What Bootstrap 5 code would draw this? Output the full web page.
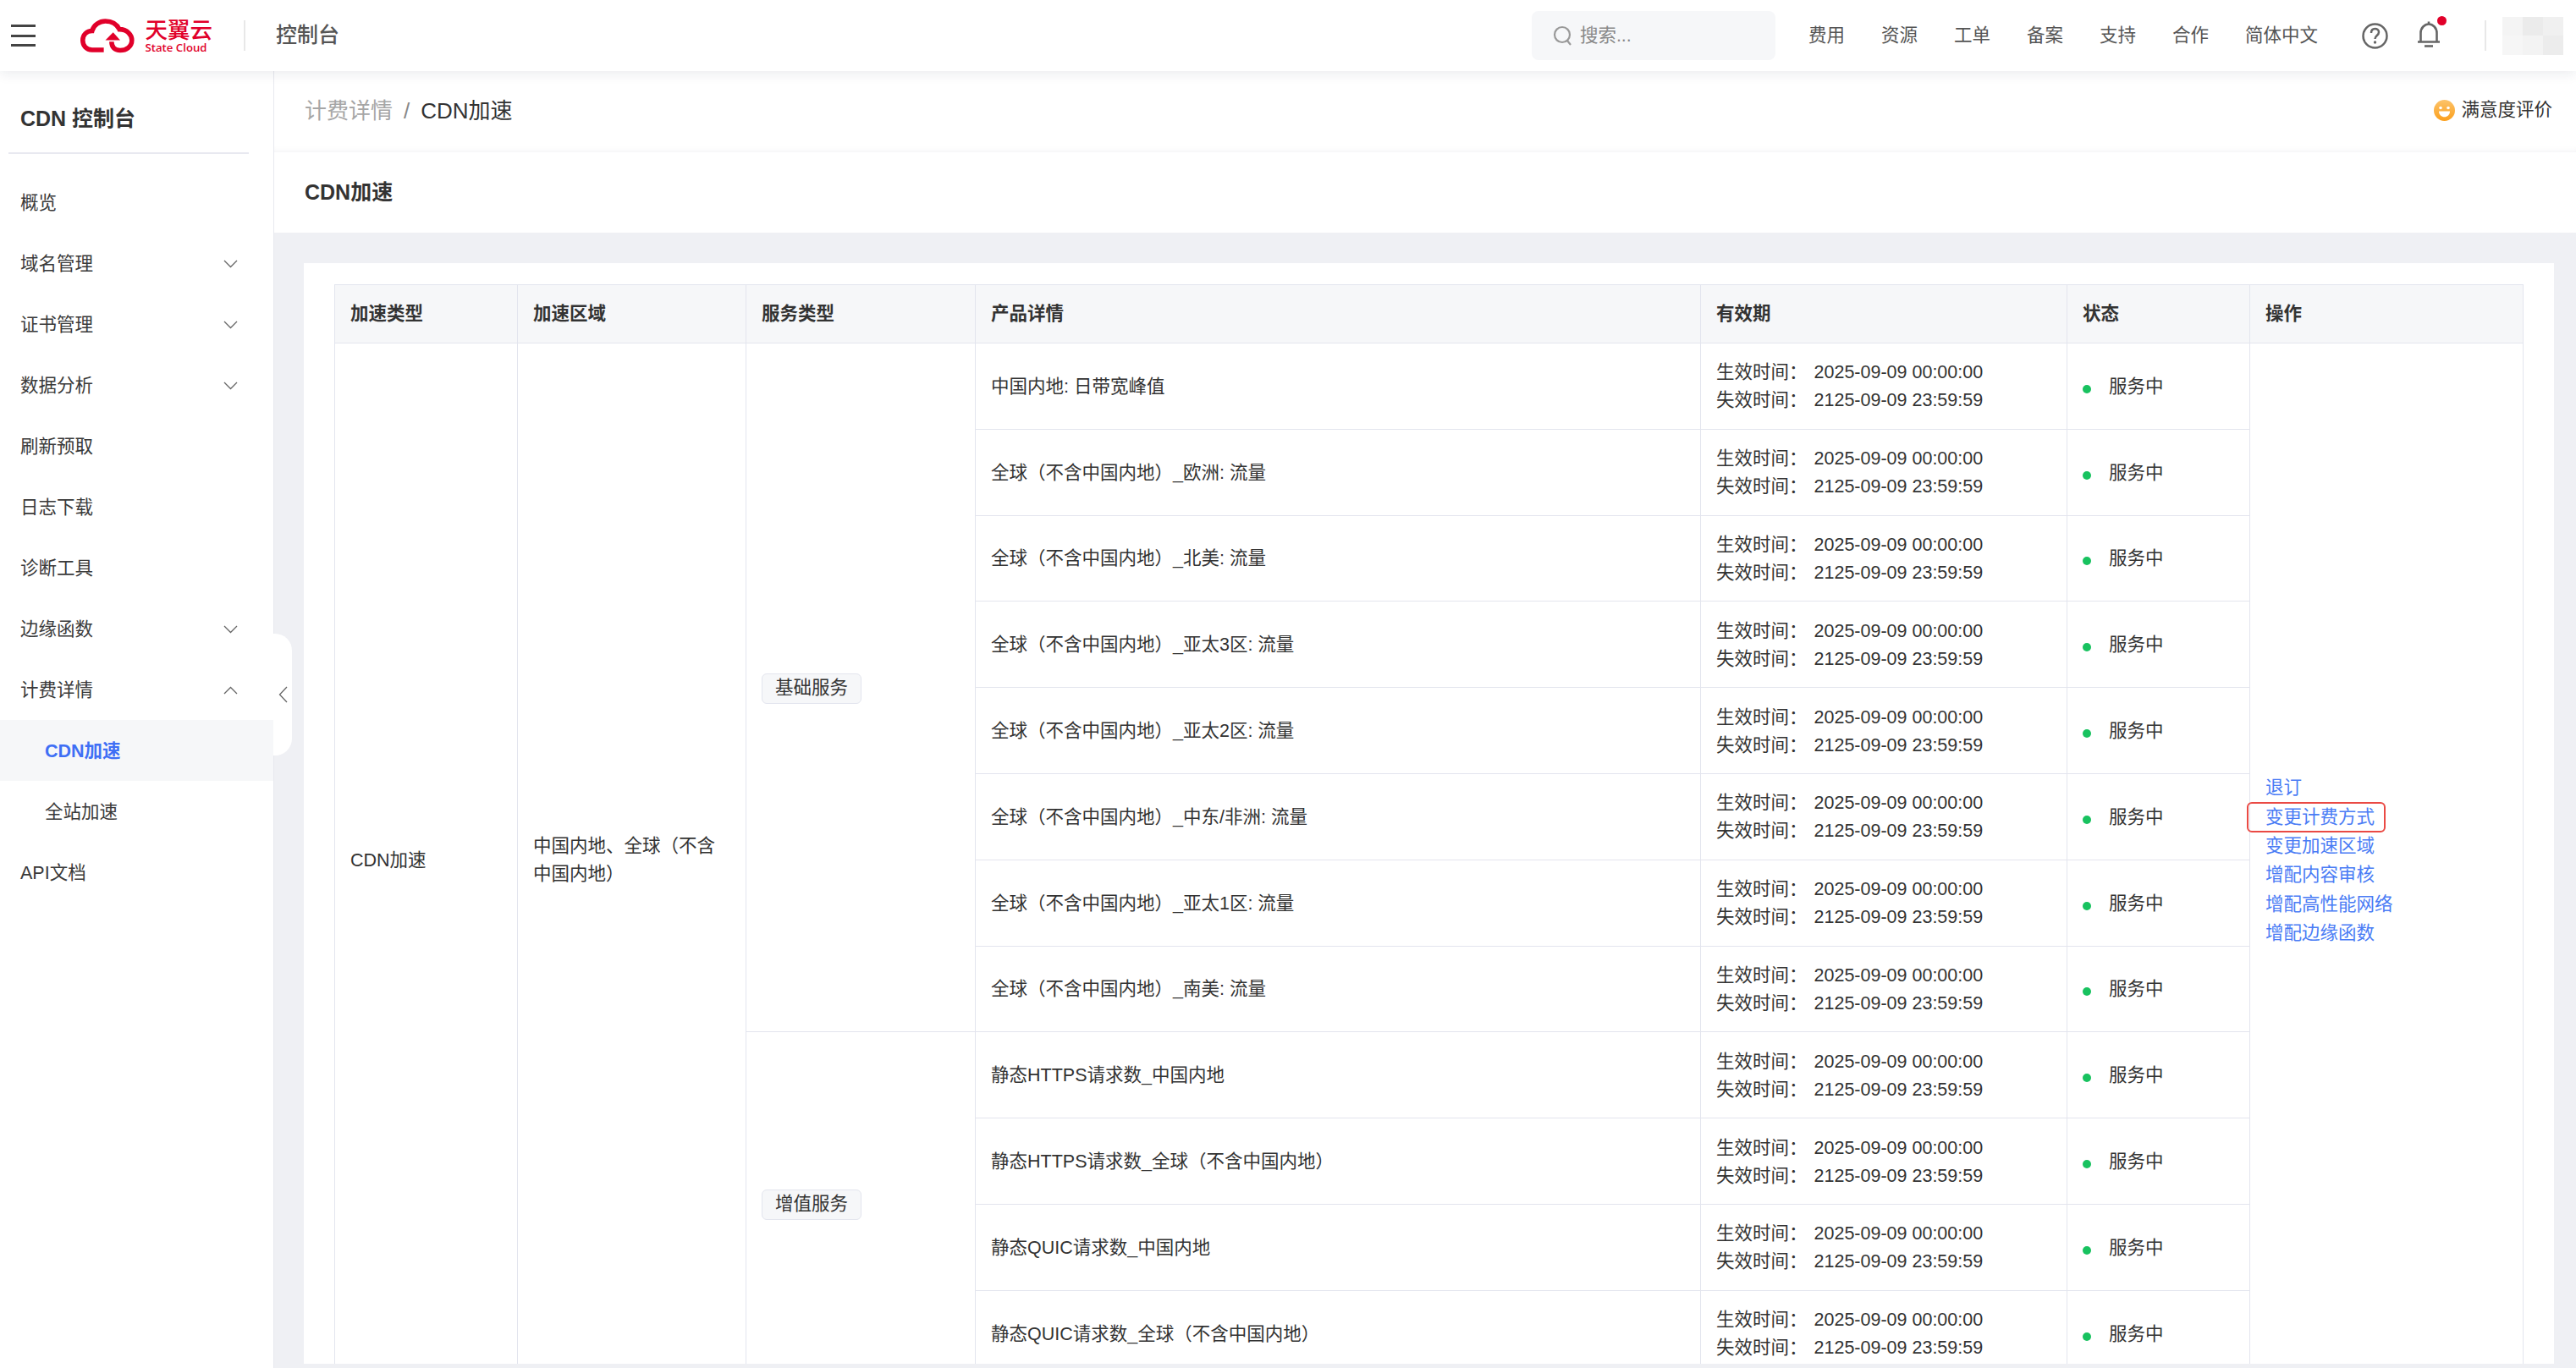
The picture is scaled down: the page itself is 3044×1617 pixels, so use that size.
<!doctype html>
<html lang="zh-CN">
<head>
<meta charset="utf-8">
<title>CDN加速</title>
<link href="https://cdn.jsdelivr.net/npm/bootstrap@5.3.0/dist/css/bootstrap.min.css" rel="stylesheet">
<style>
html,body{height:100%}
body{font-family:"Liberation Sans","Noto Sans CJK SC",sans-serif;font-size:21.5px;color:#333;background:#eff0f4;overflow:hidden}
.topbar{height:84px;flex:none;background:#fff;box-shadow:0 3px 14px rgba(20,30,70,.09);z-index:5;position:relative}
.burger{width:29px;margin-left:13px;display:flex;flex-direction:column;gap:8.5px}
.burger i{display:block;height:3px;background:#444}
.logo-wrap{margin-left:53px;width:156px;height:44px}
.logo-zh{font-family:"Noto Sans CJK SC",sans-serif;font-weight:500;font-size:26.5px;line-height:27px;color:#e1002a;letter-spacing:0;white-space:nowrap}
.logo-en{font-family:"Open Sans",sans-serif;font-weight:600;font-size:13.2px;line-height:13px;color:#e1002a;white-space:nowrap;margin-top:3px}
.vline{width:2px;height:36px;background:#e8e8e8}
.vline-a{margin-left:37px}
.vline-b{margin-left:47px}
.console-title{font-size:25px;font-weight:500;color:#555;margin-left:36px}
.searchbox{width:288px;height:58px;background:#f6f7f9;border-radius:8px;color:#888;padding-left:25px;margin-left:auto;gap:9px;font-size:21.5px}
.topnav{margin-left:39px;gap:43px;color:#555;font-size:21.5px}
.top-ico{width:31px;height:31px;margin-left:52px}
.bell-wrap{width:33px;height:36px;margin-left:34px}
.reddot{position:absolute;right:-2px;top:-5px;width:11px;height:11px;background:#e1002a;border-radius:50%}
.avatar-mos{display:grid;grid-template-columns:repeat(3,24px);grid-template-rows:repeat(2,22.5px);margin-left:19px;margin-right:15px}
.sidebar-col{width:324px;flex:none;background:#fff;position:relative;border-right:1px solid #e8e9ef}
.side-head{height:98px;margin:0 29px 0 10px;padding:24px 0 0 14px;border-bottom:2px solid #e8e9f0;font-size:25px;font-weight:700;color:#333;line-height:64px}
.side-menu{padding-top:21px}
.menu-row{height:72px;padding:2px 42px 0 24px;color:#3a3a3a}
.menu-row.sub{padding-left:53px}
.menu-row.on{background:#f6f7f9;color:#3f6ff5;font-weight:700}
.collapse-tab{position:absolute;left:323px;top:665px;width:22px;height:144px;background:#fff;border-radius:0 20px 20px 0;z-index:3}
.main-col{min-width:0;display:flex;flex-direction:column}
.crumbbar{height:96px;flex:none;background:#fff;box-shadow:inset 0 -7px 8px -7px rgba(20,30,70,.07);padding:0 28px 2px 36px}
.crumb-a{font-size:26px;color:#a6a6a6}
.crumb-s{font-size:26px;color:#888;margin:0 13px}
.crumb-b{font-size:26px;color:#333}
.rate{font-size:21.5px;gap:7px;color:#333;margin-bottom:2px}
.titlebar{height:95px;flex:none;background:#fff;padding-left:36px;font-size:25px;font-weight:700;color:#333}
.scroll-zone{flex:1;min-height:0;margin:36px 26px 5px 35px;background:#fff;overflow:hidden;padding:25px 37px 0 36px}
table.bill-table{table-layout:fixed;width:2586px;margin:0;border-color:#e3e5ee;color:#333;font-size:21.5px;--bs-table-color:#333;--bs-table-border-color:#e3e5ee}
.bill-table th{background:#f6f7f9;height:69px;padding:0 18px;font-weight:700;vertical-align:middle;box-shadow:none}
.bill-table td{padding:2px 18px 0;height:101.8px;vertical-align:middle;line-height:33px}
.svc-tag{display:inline-block;height:36px;line-height:33px;padding:0 15px;background:#f6f7f9;border:1px solid #e3e5ee;border-radius:6px;color:#333}
.val{margin-left:8px}
.okdot{display:inline-block;width:10px;height:10px;border-radius:50%;background:#18c25f;margin-right:21px;vertical-align:-1px}
.act-link{display:block;color:#4a7cf5;text-decoration:none;line-height:34.3px;position:relative}
.act-mark{position:absolute;left:-22px;top:-1px;width:164px;height:36px;border:2px solid #ea4a44;border-radius:6px}
</style>
</head>
<body class="d-flex flex-column">
<header class="topbar d-flex align-items-center">
  <div class="burger"><i></i><i></i><i></i></div>
  <div class="logo-wrap d-flex">
    <svg width="70" height="44" viewBox="0 0 70 44"><path d="M30 40.500H15C7.500 40.500 3 35 3 28C3 21 8 16 15 16C17 8 25 3.500 32 3.500C41 3.500 47 8 50 14C60 14 66 21 66 28C66 36 59 41 51 41C44 41 40 37 40 30" fill="none" stroke="#e1002a" stroke-width="6"/><path d="M42 18L32 28H51Z" fill="#e1002a"/></svg>
    <div class="ms-2 ps-1"><div class="logo-zh">天翼云</div><div class="logo-en">State Cloud</div></div>
  </div>
  <div class="vline vline-a"></div>
  <div class="console-title">控制台</div>
  <div class="searchbox d-flex align-items-center">
    <svg width="23" height="26" viewBox="0 0 23 26"><circle cx="11" cy="12" r="9" fill="none" stroke="#999" stroke-width="2.200"/><path d="M17 19l4 5" stroke="#999" stroke-width="2.200"/></svg>
    <span>搜索...</span>
  </div>
  <nav class="topnav d-flex">
    <span>费用</span><span>资源</span><span>工单</span><span>备案</span><span>支持</span><span>合作</span><span>简体中文</span>
  </nav>
  <svg class="top-ico" viewBox="0 0 31 31"><circle cx="15.500" cy="15.500" r="14" fill="none" stroke="#666" stroke-width="2.500"/><path d="M11 12c0-7 9-6 9-1c0 4-4.500 4-4.500 8" fill="none" stroke="#666" stroke-width="2.500"/><circle cx="15.500" cy="23" r="1.700" fill="#666"/></svg>
  <div class="bell-wrap position-relative">
    <svg width="28" height="32" viewBox="0 0 28 32" style="display:block"><path d="M14 1.500v3M1 25.500h26M4.500 25V15C4.500 9 9 4.500 14 4.500S23.500 9 23.500 15V25" fill="none" stroke="#666" stroke-width="2.600"/><path d="M9 30.500h10" stroke="#666" stroke-width="2.600"/></svg>
    <span class="reddot"></span>
  </div>
  <div class="vline vline-b"></div>
  <div class="avatar-mos">
    <span style="background:#f4f4f4"></span><span style="background:#ebebeb"></span><span style="background:#f0f0f0"></span>
    <span style="background:#f6f6f6"></span><span style="background:#f3f3f3"></span><span style="background:#ececec"></span>
  </div>
</header>

<div class="d-flex flex-grow-1 position-relative" style="min-height:0">
  <aside class="sidebar-col">
    <div class="side-head">CDN 控制台</div>
    <div class="side-menu">
      <div class="menu-row d-flex align-items-center">概览</div>
      <div class="menu-row d-flex align-items-center justify-content-between">域名管理<svg width="17" height="10" viewBox="0 0 17 10"><path d="M1 1l7.500 7.500L16 1" fill="none" stroke="#666" stroke-width="1.300"/></svg></div>
      <div class="menu-row d-flex align-items-center justify-content-between">证书管理<svg width="17" height="10" viewBox="0 0 17 10"><path d="M1 1l7.500 7.500L16 1" fill="none" stroke="#666" stroke-width="1.300"/></svg></div>
      <div class="menu-row d-flex align-items-center justify-content-between">数据分析<svg width="17" height="10" viewBox="0 0 17 10"><path d="M1 1l7.500 7.500L16 1" fill="none" stroke="#666" stroke-width="1.300"/></svg></div>
      <div class="menu-row d-flex align-items-center">刷新预取</div>
      <div class="menu-row d-flex align-items-center">日志下载</div>
      <div class="menu-row d-flex align-items-center">诊断工具</div>
      <div class="menu-row d-flex align-items-center justify-content-between">边缘函数<svg width="17" height="10" viewBox="0 0 17 10"><path d="M1 1l7.500 7.500L16 1" fill="none" stroke="#666" stroke-width="1.300"/></svg></div>
      <div class="menu-row d-flex align-items-center justify-content-between">计费详情<svg width="17" height="10" viewBox="0 0 17 10"><path d="M1 9l7.500-7.500L16 9" fill="none" stroke="#666" stroke-width="1.300"/></svg></div>
      <div class="menu-row sub on d-flex align-items-center">CDN加速</div>
      <div class="menu-row sub d-flex align-items-center">全站加速</div>
      <div class="menu-row d-flex align-items-center">API文档</div>
    </div>
  </aside>
  <div class="collapse-tab d-flex align-items-center justify-content-center">
    <svg width="11" height="20" viewBox="0 0 11 20"><path d="M10 1L1.500 10L10 19" fill="none" stroke="#666" stroke-width="1.300"/></svg>
  </div>

  <main class="main-col flex-grow-1">
    <div class="crumbbar d-flex align-items-center justify-content-between">
      <div class="d-flex align-items-center"><span class="crumb-a">计费详情</span><span class="crumb-s">/</span><span class="crumb-b">CDN加速</span></div>
      <div class="rate d-flex align-items-center">
        <svg width="25" height="25" viewBox="0 0 25 25"><defs><linearGradient id="sm" x1="0" y1="0" x2="0" y2="1"><stop offset="0" stop-color="#fcc36a"/><stop offset="1" stop-color="#fb9f1c"/></linearGradient></defs><circle cx="12.500" cy="12.500" r="12.500" fill="url(#sm)"/><circle cx="8" cy="9.500" r="1.800" fill="#fff"/><circle cx="17" cy="9.500" r="1.800" fill="#fff"/><path d="M6 13.500h13c0 9-13 9-13 0Z" fill="#fff"/></svg>
        <span>满意度评价</span>
      </div>
    </div>
    <div class="titlebar d-flex align-items-center">CDN加速</div>
    <div class="scroll-zone">
      <table class="table table-bordered bill-table">
        <colgroup><col style="width:216px"><col style="width:270px"><col style="width:271px"><col style="width:857px"><col style="width:433px"><col style="width:216px"><col style="width:323px"></colgroup>
        <thead><tr><th>加速类型</th><th>加速区域</th><th>服务类型</th><th>产品详情</th><th>有效期</th><th>状态</th><th>操作</th></tr></thead>
        <tbody>
          <tr>
            <td rowspan="12">CDN加速</td>
            <td rowspan="12">中国内地、全球（不含中国内地）</td>
            <td rowspan="8"><span class="svc-tag">基础服务</span></td>
            <td>中国内地: 日带宽峰值</td>
            <td>生效时间：<span class="val">2025-09-09 00:00:00</span><br>失效时间：<span class="val">2125-09-09 23:59:59</span></td>
            <td><span class="okdot"></span>服务中</td>
            <td rowspan="12">
              <a class="act-link" href="#">退订</a>
              <a class="act-link" href="#">变更计费方式<span class="act-mark"></span></a>
              <a class="act-link" href="#">变更加速区域</a>
              <a class="act-link" href="#">增配内容审核</a>
              <a class="act-link" href="#">增配高性能网络</a>
              <a class="act-link" href="#">增配边缘函数</a>
            </td>
          </tr>
          <tr><td>全球（不含中国内地）_欧洲: 流量</td><td>生效时间：<span class="val">2025-09-09 00:00:00</span><br>失效时间：<span class="val">2125-09-09 23:59:59</span></td><td><span class="okdot"></span>服务中</td></tr>
          <tr><td>全球（不含中国内地）_北美: 流量</td><td>生效时间：<span class="val">2025-09-09 00:00:00</span><br>失效时间：<span class="val">2125-09-09 23:59:59</span></td><td><span class="okdot"></span>服务中</td></tr>
          <tr><td>全球（不含中国内地）_亚太3区: 流量</td><td>生效时间：<span class="val">2025-09-09 00:00:00</span><br>失效时间：<span class="val">2125-09-09 23:59:59</span></td><td><span class="okdot"></span>服务中</td></tr>
          <tr><td>全球（不含中国内地）_亚太2区: 流量</td><td>生效时间：<span class="val">2025-09-09 00:00:00</span><br>失效时间：<span class="val">2125-09-09 23:59:59</span></td><td><span class="okdot"></span>服务中</td></tr>
          <tr><td>全球（不含中国内地）_中东/非洲: 流量</td><td>生效时间：<span class="val">2025-09-09 00:00:00</span><br>失效时间：<span class="val">2125-09-09 23:59:59</span></td><td><span class="okdot"></span>服务中</td></tr>
          <tr><td>全球（不含中国内地）_亚太1区: 流量</td><td>生效时间：<span class="val">2025-09-09 00:00:00</span><br>失效时间：<span class="val">2125-09-09 23:59:59</span></td><td><span class="okdot"></span>服务中</td></tr>
          <tr><td>全球（不含中国内地）_南美: 流量</td><td>生效时间：<span class="val">2025-09-09 00:00:00</span><br>失效时间：<span class="val">2125-09-09 23:59:59</span></td><td><span class="okdot"></span>服务中</td></tr>
          <tr><td rowspan="4"><span class="svc-tag">增值服务</span></td><td>静态HTTPS请求数_中国内地</td><td>生效时间：<span class="val">2025-09-09 00:00:00</span><br>失效时间：<span class="val">2125-09-09 23:59:59</span></td><td><span class="okdot"></span>服务中</td></tr>
          <tr><td>静态HTTPS请求数_全球（不含中国内地）</td><td>生效时间：<span class="val">2025-09-09 00:00:00</span><br>失效时间：<span class="val">2125-09-09 23:59:59</span></td><td><span class="okdot"></span>服务中</td></tr>
          <tr><td>静态QUIC请求数_中国内地</td><td>生效时间：<span class="val">2025-09-09 00:00:00</span><br>失效时间：<span class="val">2125-09-09 23:59:59</span></td><td><span class="okdot"></span>服务中</td></tr>
          <tr><td>静态QUIC请求数_全球（不含中国内地）</td><td>生效时间：<span class="val">2025-09-09 00:00:00</span><br>失效时间：<span class="val">2125-09-09 23:59:59</span></td><td><span class="okdot"></span>服务中</td></tr>
        </tbody>
      </table>
    </div>
  </main>
</div>
<script src="https://cdn.jsdelivr.net/npm/bootstrap@5.3.0/dist/js/bootstrap.bundle.min.js"></script>
</body>
</html>
